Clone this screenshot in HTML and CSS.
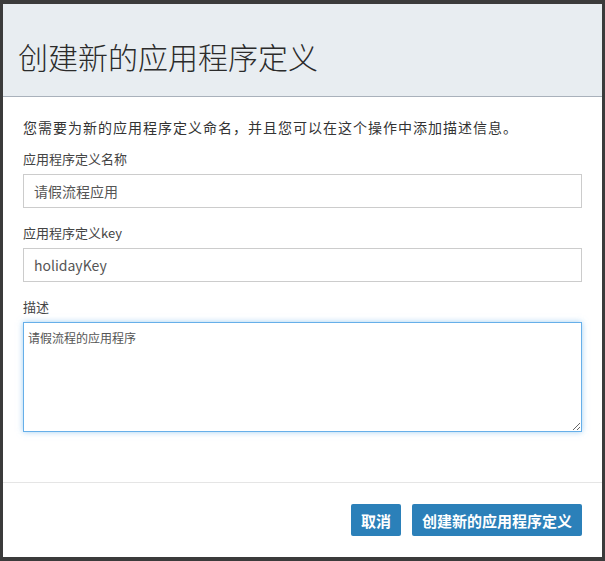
FILE: index.html
```html
<!DOCTYPE html>
<html lang="zh-CN">
<head>
  <meta charset="UTF-8" />
  <title>创建新的应用程序定义</title>
  <link rel="stylesheet" href="styles.css">
</head>
<body>

  <div class="modal">
    <div class="modal-header">
      <h1>创建新的应用程序定义</h1>
    </div>

    <div class="modal-body">
      <p class="intro">您需要为新的应用程序定义命名，并且您可以在这个操作中添加描述信息。</p>

      <div class="form-group">
        <label>应用程序定义名称</label>
        <input class="form-control" type="text" value="请假流程应用">
      </div>

      <div class="form-group">
        <label>应用程序定义key</label>
        <input class="form-control" type="text" value="holidayKey">
      </div>

      <div class="form-group">
        <label>描述</label>
        <textarea class="form-control focused">请假流程的应用程序</textarea>
      </div>
    </div>

    <div class="modal-footer">
      <button class="btn">取消</button>
      <button class="btn">创建新的应用程序定义</button>
    </div>
  </div>

</body>
</html>
```

FILE: styles.css
```css
html, body {
  height: 100%;
}

body {
  margin: 0;
  padding: 4px 3px;
  box-sizing: border-box;
  background-color: #3b3b3b;
  font-family: "Noto Sans CJK SC", "Noto Sans", sans-serif;
  color: #333;
}

.modal {
  background: #fff;
  height: 553px;
  display: flex;
  flex-direction: column;
}

.modal-header {
  background-color: #e8edf1;
  border-bottom: 1px solid #a9b1bb;
  box-sizing: border-box;
  height: 93px;
  display: flex;
  align-items: center;
  padding: 11px 15px 0;
}

.modal-header h1 {
  margin: 0;
  font-size: 30px;
  font-weight: 300;
  color: #2b2b2b;
}

.modal-body {
  padding: 20px 20px 0;
  flex: 1;
}

.intro {
  margin: 0 0 12px;
  font-size: 14px;
  line-height: 20px;
  letter-spacing: 1px;
}

.form-group {
  margin-bottom: 15px;
}

.form-group label {
  display: block;
  font-size: 13px;
  line-height: 20px;
  color: #444;
  margin-bottom: 5px;
}

.form-control {
  display: block;
  width: 100%;
  box-sizing: border-box;
  height: 34px;
  padding: 6px 10px;
  border: 1px solid #cccccc;
  font-family: inherit;
  font-size: 14px;
  color: #555;
  outline: none;
  background: #fff;
}

textarea.form-control {
  height: 110px;
  resize: both;
  padding: 6px 4px;
  font-size: 12px;
  line-height: 18px;
}

.form-control.focused {
  border-color: #66afe9;
  box-shadow: 0 0 6px rgba(102, 175, 233, 0.6);
}

.modal-footer {
  border-top: 1px solid #e5e5e5;
  height: 74px;
  display: flex;
  align-items: center;
  justify-content: flex-end;
  gap: 11px;
  padding: 0 20px 0 0;
}

.btn {
  height: 32px;
  padding: 0 10px;
  border: none;
  border-radius: 2px;
  background-color: #2b80b9;
  color: #fff;
  font-family: inherit;
  font-size: 15px;
  font-weight: bold;
  cursor: pointer;
}

.btn:hover {
  background-color: #236a9b;
}
```
